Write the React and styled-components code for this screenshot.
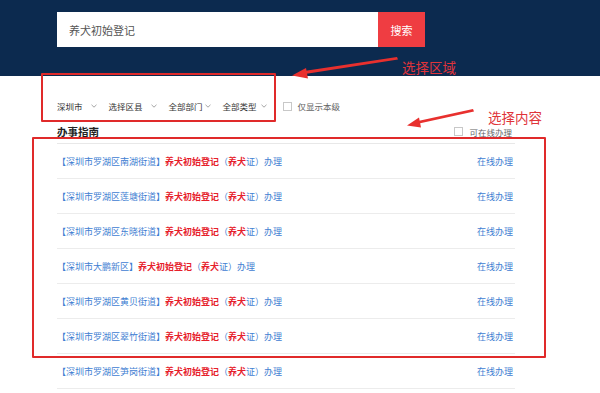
import React from 'react'
import styled, { createGlobalStyle } from 'styled-components'

const GlobalStyle = createGlobalStyle`
    html, body {
        margin     : 0;
        padding    : 0;
        background : #fff;
    }
    body {
        font-family : "Noto Sans CJK SC", "Noto Sans", sans-serif;
    }
`

const filters = [
    { label: '深圳市', gap: 8 },
    { label: '选择区县', gap: 8 },
    { label: '全部部门', gap: 2 },
    { label: '全部类型', gap: 4 },
]

const districts = [
    '深圳市罗湖区南湖街道',
    '深圳市罗湖区莲塘街道',
    '深圳市罗湖区东晓街道',
    '深圳市大鹏新区',
    '深圳市罗湖区黄贝街道',
    '深圳市罗湖区翠竹街道',
    '深圳市罗湖区笋岗街道',
]

const Chevron = () => (
    <svg width="6" height="4" viewBox="0 0 6 4">
        <path d="M0.5 0.8 L3 3.2 L5.5 0.8" fill="none" stroke="#9a9a9a" strokeWidth="0.9" />
    </svg>
)

const App = () => {
    return (
        <>
            <GlobalStyle />
            <Page>
                <Header>
                    <SearchBar>
                        <SearchInput>养犬初始登记</SearchInput>
                        <SearchButton>搜索</SearchButton>
                    </SearchBar>
                </Header>

                <Content>
                    <FilterRow>
                        {filters.map(f => (
                            <FilterItem key={f.label} $gap={f.gap}>
                                <span>{f.label}</span>
                                <Chevron />
                            </FilterItem>
                        ))}
                        <CheckLabel $ml={4}>
                            <CheckBox />
                            仅显示本级
                        </CheckLabel>
                    </FilterRow>

                    <TitleRow>
                        <Title>办事指南</Title>
                        <CheckLabel $ml={0}>
                            <CheckBox />
                            可在线办理
                        </CheckLabel>
                    </TitleRow>

                    <List>
                        {districts.map(d => (
                            <Row key={d}>
                                <RowTitle>
                                    <Blue>【{d}】</Blue>
                                    <Red>养犬初始登记</Red>
                                    <Blue>（</Blue>
                                    <Red>养犬</Red>
                                    <Blue>证）办理</Blue>
                                </RowTitle>
                                <RowAction>在线办理</RowAction>
                            </Row>
                        ))}
                    </List>
                </Content>

                {/* annotations drawn over the screenshot */}
                <MarkBox $x={41} $y={73} $w={235} $h={49} />
                <MarkBox $x={32} $y={137} $w={514} $h={221} />
                <Note $x={402} $y={58}>选择区域</Note>
                <Note $x={488} $y={108}>选择内容</Note>
                <Arrows width="600" height="393" viewBox="0 0 600 393">
                    <polygon points="397,57 398,59.5 305,74 304,71" fill="#e8302e" />
                    <polygon points="292,75.5 306,68 308,78.5" fill="#e8302e" />
                    <polygon points="473,109 474,111.5 419,123.5 418,121" fill="#e8302e" />
                    <polygon points="407,125.5 419,117.5 421,127.5" fill="#e8302e" />
                </Arrows>
            </Page>
        </>
    )
}

export default App

const Page = styled.div`
    position : relative;
    width    : 600px;
    height   : 393px;
    overflow : hidden;
`

const Header = styled.div`
    height      : 76px;
    background  : #0c2a4f;
    padding     : 12px 0 0 57px;
    box-sizing  : border-box;
`

const SearchBar = styled.div`
    display : flex;
    height  : 35px;
`

const SearchInput = styled.div`
    display     : flex;
    align-items : center;
    width       : 321px;
    padding     : 0 12px;
    box-sizing  : border-box;
    background  : #fff;
    color       : #555;
    font-size   : 11px;
`

const SearchButton = styled.div`
    display         : flex;
    align-items     : center;
    justify-content : center;
    width           : 47px;
    background      : #ef3d42;
    color           : #fff;
    font-size       : 11px;
`

const Content = styled.div`
    width   : 458px;
    padding : 0 0 0 57px;
`

const FilterRow = styled.div`
    display     : flex;
    align-items : center;
    gap         : 12px;
    height      : 20px;
    margin-top  : 20px;
    font-size   : 8.5px;
    color       : #333;
`

const FilterItem = styled.div`
    display     : flex;
    align-items : center;
    gap         : ${p => p.$gap}px;
    white-space : nowrap;
`

const CheckLabel = styled.label`
    display     : flex;
    align-items : center;
    gap         : 6px;
    margin-left : ${p => p.$ml}px;
    font-size   : 8.5px;
    color       : #666;
    white-space : nowrap;
`

const CheckBox = styled.span`
    width         : 7px;
    height        : 7px;
    border        : 1px solid #c8c8c8;
    background    : #fff;
`

const TitleRow = styled.div`
    display         : flex;
    align-items     : center;
    justify-content : space-between;
    height          : 17px;
    margin-top      : 7px;
    padding         : 0 3px 3px 0;
    border-bottom   : 1px solid #e8e8e8;
`

const Title = styled.div`
    font-size   : 10.5px;
    font-weight : 700;
    color       : #222;
`

const List = styled.div`
    display        : flex;
    flex-direction : column;
`

const Row = styled.div`
    display         : flex;
    align-items     : center;
    justify-content : space-between;
    height          : 34px;
    padding-right   : 2px;
    border-bottom   : 1px solid #ececec;
    font-size       : 9px;
`

const RowTitle = styled.div`
    white-space : nowrap;
`

const Blue = styled.span`
    color : #3f80d2;
`

const Red = styled.span`
    color       : #e6202b;
    font-weight : 700;
`

const RowAction = styled.div`
    color : #3f80d2;
`

const MarkBox = styled.div`
    position      : absolute;
    left          : ${p => p.$x}px;
    top           : ${p => p.$y}px;
    width         : ${p => p.$w}px;
    height        : ${p => p.$h}px;
    border        : 2px solid #e02a2a;
    box-sizing    : border-box;
    border-radius : 1px;
    pointer-events: none;
`

const Note = styled.div`
    position    : absolute;
    left        : ${p => p.$x}px;
    top         : ${p => p.$y}px;
    font-size   : 13.5px;
    line-height : 18px;
    color       : #e0343a;
`

const Arrows = styled.svg`
    position       : absolute;
    left           : 0;
    top            : 0;
    pointer-events : none;
`
